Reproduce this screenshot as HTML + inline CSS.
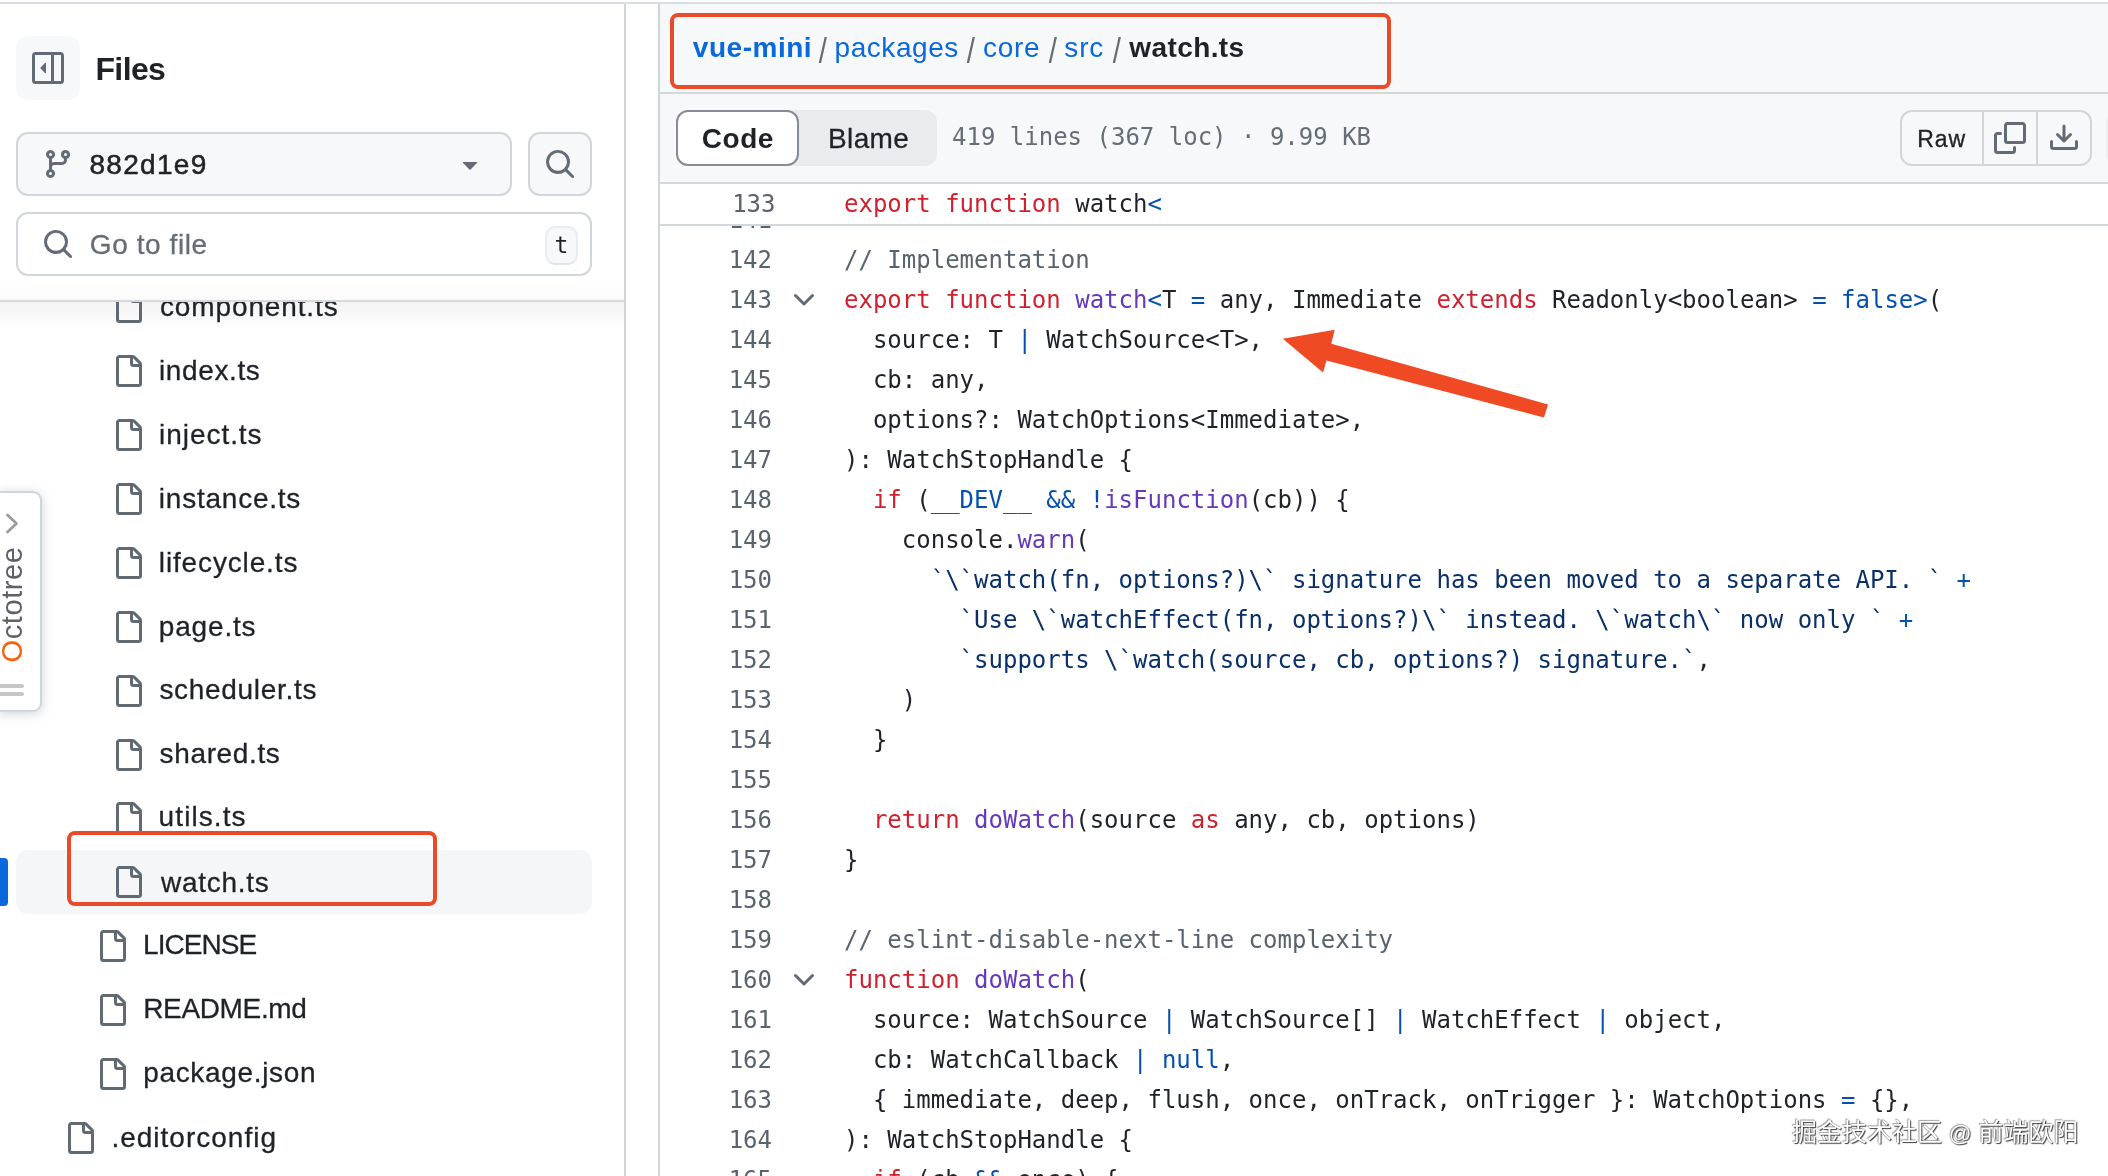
<!DOCTYPE html>
<html lang="zh"><head><meta charset="utf-8"><title>watch.ts</title>
<style>
*{box-sizing:border-box;margin:0;padding:0}
html,body{width:2108px;height:1176px;overflow:hidden;background:#fff}
body{will-change:transform;position:relative;font-family:"Liberation Sans","Noto Sans CJK SC",sans-serif;color:#1f2328;-webkit-font-smoothing:antialiased}
.abs,.ic,.tname,.ln,.cl{position:absolute}
.ic{display:block}
.topline{left:0;top:2px;width:2108px;height:2px;background:#d9dce0}
/* sidebar */
.sb-border{left:624px;top:4px;width:2px;height:1172px;background:#d2d5d8}
.tree{left:0;top:302px;width:624px;height:874px;overflow:hidden}
.treein{position:absolute;left:0;top:-302px;width:624px;height:1176px}
.tname{font-size:28px;line-height:40px;white-space:nowrap;color:#1f2328;-webkit-text-stroke:.3px #1f2328}
.sel{left:16px;top:850px;width:576px;height:64px;border-radius:12px;background:#f4f6f8}
.selbar{left:0;top:858px;width:8px;height:48px;border-radius:0 4px 4px 0;background:#0969da}
.sbhead{left:0;top:4px;width:624px;height:296px;background:linear-gradient(#fff 0,#fff 278px,#fafafb 296px)}
.sbline{left:0;top:300px;width:624px;height:2px;background:#d6d8da}
.sbshadow{left:0;top:302px;width:624px;height:28px;background:linear-gradient(#f3f3f4,#fff)}
.collapse{left:16px;top:36px;width:64px;height:64px;border-radius:12px;background:#f6f8fa}
.files{font-size:32px;line-height:40px;font-weight:bold;color:#1f2328}
.btn{background:#f6f8fa;border:2px solid #d1d6db;border-radius:12px}
.branch{left:16px;top:132px;width:496px;height:64px}
.branchtxt{font-size:28px;line-height:40px;-webkit-text-stroke:.55px #1f2328}
.searchbtn{left:528px;top:132px;width:64px;height:64px}
.goto{left:16px;top:212px;width:576px;height:64px;background:#fff;border:2px solid #d1d6db;border-radius:12px}
.gototxt{font-size:28px;line-height:40px;color:#656d76;white-space:nowrap;-webkit-text-stroke:.3px #656d76}
.kbd{left:545px;top:225.5px;width:33px;height:39.5px;border-radius:10px;background:#f6f8fa;border:2px solid #eaecef;border-bottom-color:#e1e4e8;font-family:"DejaVu Sans Mono","Liberation Mono",monospace;font-size:23px;line-height:35px;text-align:center;color:#1f2328}
/* octotree */
.octo{left:-2px;top:491px;width:44px;height:221px;background:#fff;border:2px solid #cdd6de;border-radius:0 9px 9px 0;box-shadow:0 2px 12px rgba(110,125,140,.32)}
.octotxt{left:-45px;top:585.5px;width:113px;height:40px;font-size:29px;line-height:40px;letter-spacing:.6px;color:#5b626a;transform:rotate(-90deg);transform-origin:center;white-space:nowrap;text-align:left}
.octotxt b{font-weight:normal;color:#f4620c}
.bar{left:0;width:24px;height:4px;border-radius:0 2px 2px 0;background:#c6c6c6}
/* main */
.mainborder{left:658px;top:4px;width:2px;height:1172px;background:#d1d4d9}
.head{left:660px;top:4px;width:1448px;height:88px;background:#f6f8fa}
.headline{left:660px;top:92px;width:1448px;height:2px;background:#d3d8dd}
.tool{left:660px;top:94px;width:1448px;height:88px;background:#f6f8fa}
.toolline{left:660px;top:182px;width:1448px;height:2px;background:#d3d8dd}
.crumb{font-size:28px;line-height:40px;white-space:nowrap;color:#1f2328}
.lnk{color:#0969da}
.bold{font-weight:bold}
.slash{top:31px;font-size:35px;line-height:40px;color:#656d76;transform:scaleX(.84)}
.seg{left:676px;top:110px;width:261px;height:56px;border-radius:12px;background:#e9ecef}
.codebtn{left:676px;top:110px;width:123px;height:56px;border-radius:12px;background:#fff;border:2px solid #868c93;font-size:28px;font-weight:bold;line-height:52px;text-align:center;color:#1f2328}
.blame{font-size:28px;line-height:40px;color:#1f2328;-webkit-text-stroke:.3px #1f2328}
.codetxt{font-size:28px;line-height:40px;font-weight:bold;color:#1f2328}
.meta{left:952px;top:117px;font-family:"DejaVu Sans Mono","Liberation Mono",monospace;font-size:24px;line-height:40px;color:#656d76;white-space:pre}
.grp{left:1900px;top:110px;width:192px;height:56px}
.div{top:112px;width:2px;height:52px;background:#d1d6db}
.raw{font-size:23px;line-height:40px;color:#1f2328;-webkit-text-stroke:.35px #1f2328}
/* code */
.code{left:660px;top:226px;width:1448px;height:950px;overflow:hidden}
.codein{position:absolute;left:-660px;top:-226px;width:2108px;height:1176px}
.ln,.cl{font-family:"DejaVu Sans Mono","Liberation Mono",monospace;font-size:24px;line-height:40px;height:40px;white-space:pre}
.ln{left:660px;width:112px;text-align:right;color:#59636e}
.cl{left:844px;color:#1f2328}
.k{color:#cf222e}.f{color:#6639ba}.c{color:#0550ae}.s{color:#0a3069}.m{color:#59636e}
.sticky{left:660px;top:184px;width:1448px;height:40px;background:#fff}
.stickyline{left:660px;top:224px;width:1448px;height:2px;background:#d3d8dd}
.redbox{border:4px solid #ea4a29;border-radius:8px}
.wm span{font-size:22.5px;letter-spacing:.4px}
.wm{left:1792px;top:1112px;font-size:25px;line-height:40px;white-space:nowrap;color:#fff;text-shadow:1px 1px 1px #3c3c3c,0 0 1px #777,-1px -1px 1px #aaa}
</style></head><body>
<div class="abs topline"></div>

<!-- sidebar tree -->
<div class="abs sbshadow"></div>
<div class="abs tree"><div class="treein">
<div class="abs sel"></div>
<svg class="ic" style="left:112px;top:291.1px" width="32" height="32" viewBox="0 0 16 16" fill="#616a74" ><path d="M2 1.75C2 .784 2.784 0 3.75 0h6.586c.464 0 .909.184 1.237.513l2.914 2.914c.329.328.513.773.513 1.237v9.586A1.75 1.75 0 0 1 13.25 16h-9.5A1.75 1.75 0 0 1 2 14.25Zm1.75-.25a.25.25 0 0 0-.25.25v12.5c0 .138.112.25.25.25h9.5a.25.25 0 0 0 .25-.25V6h-2.75A1.75 1.75 0 0 1 9 4.25V1.5Zm6.75.062V4.25c0 .138.112.25.25.25h2.688l-.011-.013-2.914-2.914-.013-.011Z"/></svg>
<div class="abs tname" style="left:160.0px;top:287px;letter-spacing:0.87px">component.ts</div>
<svg class="ic" style="left:112px;top:355.0px" width="32" height="32" viewBox="0 0 16 16" fill="#616a74" ><path d="M2 1.75C2 .784 2.784 0 3.75 0h6.586c.464 0 .909.184 1.237.513l2.914 2.914c.329.328.513.773.513 1.237v9.586A1.75 1.75 0 0 1 13.25 16h-9.5A1.75 1.75 0 0 1 2 14.25Zm1.75-.25a.25.25 0 0 0-.25.25v12.5c0 .138.112.25.25.25h9.5a.25.25 0 0 0 .25-.25V6h-2.75A1.75 1.75 0 0 1 9 4.25V1.5Zm6.75.062V4.25c0 .138.112.25.25.25h2.688l-.011-.013-2.914-2.914-.013-.011Z"/></svg>
<div class="abs tname" style="left:159.0px;top:351px;letter-spacing:0.61px">index.ts</div>
<svg class="ic" style="left:112px;top:418.9px" width="32" height="32" viewBox="0 0 16 16" fill="#616a74" ><path d="M2 1.75C2 .784 2.784 0 3.75 0h6.586c.464 0 .909.184 1.237.513l2.914 2.914c.329.328.513.773.513 1.237v9.586A1.75 1.75 0 0 1 13.25 16h-9.5A1.75 1.75 0 0 1 2 14.25Zm1.75-.25a.25.25 0 0 0-.25.25v12.5c0 .138.112.25.25.25h9.5a.25.25 0 0 0 .25-.25V6h-2.75A1.75 1.75 0 0 1 9 4.25V1.5Zm6.75.062V4.25c0 .138.112.25.25.25h2.688l-.011-.013-2.914-2.914-.013-.011Z"/></svg>
<div class="abs tname" style="left:159.0px;top:415px;letter-spacing:0.96px">inject.ts</div>
<svg class="ic" style="left:112px;top:482.8px" width="32" height="32" viewBox="0 0 16 16" fill="#616a74" ><path d="M2 1.75C2 .784 2.784 0 3.75 0h6.586c.464 0 .909.184 1.237.513l2.914 2.914c.329.328.513.773.513 1.237v9.586A1.75 1.75 0 0 1 13.25 16h-9.5A1.75 1.75 0 0 1 2 14.25Zm1.75-.25a.25.25 0 0 0-.25.25v12.5c0 .138.112.25.25.25h9.5a.25.25 0 0 0 .25-.25V6h-2.75A1.75 1.75 0 0 1 9 4.25V1.5Zm6.75.062V4.25c0 .138.112.25.25.25h2.688l-.011-.013-2.914-2.914-.013-.011Z"/></svg>
<div class="abs tname" style="left:158.8px;top:479px;letter-spacing:0.77px">instance.ts</div>
<svg class="ic" style="left:112px;top:546.8px" width="32" height="32" viewBox="0 0 16 16" fill="#616a74" ><path d="M2 1.75C2 .784 2.784 0 3.75 0h6.586c.464 0 .909.184 1.237.513l2.914 2.914c.329.328.513.773.513 1.237v9.586A1.75 1.75 0 0 1 13.25 16h-9.5A1.75 1.75 0 0 1 2 14.25Zm1.75-.25a.25.25 0 0 0-.25.25v12.5c0 .138.112.25.25.25h9.5a.25.25 0 0 0 .25-.25V6h-2.75A1.75 1.75 0 0 1 9 4.25V1.5Zm6.75.062V4.25c0 .138.112.25.25.25h2.688l-.011-.013-2.914-2.914-.013-.011Z"/></svg>
<div class="abs tname" style="left:158.8px;top:543px;letter-spacing:0.86px">lifecycle.ts</div>
<svg class="ic" style="left:112px;top:610.7px" width="32" height="32" viewBox="0 0 16 16" fill="#616a74" ><path d="M2 1.75C2 .784 2.784 0 3.75 0h6.586c.464 0 .909.184 1.237.513l2.914 2.914c.329.328.513.773.513 1.237v9.586A1.75 1.75 0 0 1 13.25 16h-9.5A1.75 1.75 0 0 1 2 14.25Zm1.75-.25a.25.25 0 0 0-.25.25v12.5c0 .138.112.25.25.25h9.5a.25.25 0 0 0 .25-.25V6h-2.75A1.75 1.75 0 0 1 9 4.25V1.5Zm6.75.062V4.25c0 .138.112.25.25.25h2.688l-.011-.013-2.914-2.914-.013-.011Z"/></svg>
<div class="abs tname" style="left:158.8px;top:607px;letter-spacing:0.83px">page.ts</div>
<svg class="ic" style="left:112px;top:674.6px" width="32" height="32" viewBox="0 0 16 16" fill="#616a74" ><path d="M2 1.75C2 .784 2.784 0 3.75 0h6.586c.464 0 .909.184 1.237.513l2.914 2.914c.329.328.513.773.513 1.237v9.586A1.75 1.75 0 0 1 13.25 16h-9.5A1.75 1.75 0 0 1 2 14.25Zm1.75-.25a.25.25 0 0 0-.25.25v12.5c0 .138.112.25.25.25h9.5a.25.25 0 0 0 .25-.25V6h-2.75A1.75 1.75 0 0 1 9 4.25V1.5Zm6.75.062V4.25c0 .138.112.25.25.25h2.688l-.011-.013-2.914-2.914-.013-.011Z"/></svg>
<div class="abs tname" style="left:159.4px;top:670px;letter-spacing:0.69px">scheduler.ts</div>
<svg class="ic" style="left:112px;top:738.5px" width="32" height="32" viewBox="0 0 16 16" fill="#616a74" ><path d="M2 1.75C2 .784 2.784 0 3.75 0h6.586c.464 0 .909.184 1.237.513l2.914 2.914c.329.328.513.773.513 1.237v9.586A1.75 1.75 0 0 1 13.25 16h-9.5A1.75 1.75 0 0 1 2 14.25Zm1.75-.25a.25.25 0 0 0-.25.25v12.5c0 .138.112.25.25.25h9.5a.25.25 0 0 0 .25-.25V6h-2.75A1.75 1.75 0 0 1 9 4.25V1.5Zm6.75.062V4.25c0 .138.112.25.25.25h2.688l-.011-.013-2.914-2.914-.013-.011Z"/></svg>
<div class="abs tname" style="left:159.6px;top:734px;letter-spacing:0.63px">shared.ts</div>
<svg class="ic" style="left:112px;top:802.4px" width="32" height="32" viewBox="0 0 16 16" fill="#616a74" ><path d="M2 1.75C2 .784 2.784 0 3.75 0h6.586c.464 0 .909.184 1.237.513l2.914 2.914c.329.328.513.773.513 1.237v9.586A1.75 1.75 0 0 1 13.25 16h-9.5A1.75 1.75 0 0 1 2 14.25Zm1.75-.25a.25.25 0 0 0-.25.25v12.5c0 .138.112.25.25.25h9.5a.25.25 0 0 0 .25-.25V6h-2.75A1.75 1.75 0 0 1 9 4.25V1.5Zm6.75.062V4.25c0 .138.112.25.25.25h2.688l-.011-.013-2.914-2.914-.013-.011Z"/></svg>
<div class="abs tname" style="left:158.6px;top:797px;letter-spacing:1.09px">utils.ts</div>
<svg class="ic" style="left:112px;top:866.4px" width="32" height="32" viewBox="0 0 16 16" fill="#616a74" ><path d="M2 1.75C2 .784 2.784 0 3.75 0h6.586c.464 0 .909.184 1.237.513l2.914 2.914c.329.328.513.773.513 1.237v9.586A1.75 1.75 0 0 1 13.25 16h-9.5A1.75 1.75 0 0 1 2 14.25Zm1.75-.25a.25.25 0 0 0-.25.25v12.5c0 .138.112.25.25.25h9.5a.25.25 0 0 0 .25-.25V6h-2.75A1.75 1.75 0 0 1 9 4.25V1.5Zm6.75.062V4.25c0 .138.112.25.25.25h2.688l-.011-.013-2.914-2.914-.013-.011Z"/></svg>
<div class="abs tname" style="left:161.0px;top:863px;letter-spacing:0.71px">watch.ts</div>
<svg class="ic" style="left:96px;top:930.3px" width="32" height="32" viewBox="0 0 16 16" fill="#616a74" ><path d="M2 1.75C2 .784 2.784 0 3.75 0h6.586c.464 0 .909.184 1.237.513l2.914 2.914c.329.328.513.773.513 1.237v9.586A1.75 1.75 0 0 1 13.25 16h-9.5A1.75 1.75 0 0 1 2 14.25Zm1.75-.25a.25.25 0 0 0-.25.25v12.5c0 .138.112.25.25.25h9.5a.25.25 0 0 0 .25-.25V6h-2.75A1.75 1.75 0 0 1 9 4.25V1.5Zm6.75.062V4.25c0 .138.112.25.25.25h2.688l-.011-.013-2.914-2.914-.013-.011Z"/></svg>
<div class="abs tname" style="left:143.1px;top:925px;letter-spacing:-0.97px">LICENSE</div>
<svg class="ic" style="left:96px;top:994.2px" width="32" height="32" viewBox="0 0 16 16" fill="#616a74" ><path d="M2 1.75C2 .784 2.784 0 3.75 0h6.586c.464 0 .909.184 1.237.513l2.914 2.914c.329.328.513.773.513 1.237v9.586A1.75 1.75 0 0 1 13.25 16h-9.5A1.75 1.75 0 0 1 2 14.25Zm1.75-.25a.25.25 0 0 0-.25.25v12.5c0 .138.112.25.25.25h9.5a.25.25 0 0 0 .25-.25V6h-2.75A1.75 1.75 0 0 1 9 4.25V1.5Zm6.75.062V4.25c0 .138.112.25.25.25h2.688l-.011-.013-2.914-2.914-.013-.011Z"/></svg>
<div class="abs tname" style="left:143.2px;top:989px;letter-spacing:-0.35px">README.md</div>
<svg class="ic" style="left:96px;top:1058.1px" width="32" height="32" viewBox="0 0 16 16" fill="#616a74" ><path d="M2 1.75C2 .784 2.784 0 3.75 0h6.586c.464 0 .909.184 1.237.513l2.914 2.914c.329.328.513.773.513 1.237v9.586A1.75 1.75 0 0 1 13.25 16h-9.5A1.75 1.75 0 0 1 2 14.25Zm1.75-.25a.25.25 0 0 0-.25.25v12.5c0 .138.112.25.25.25h9.5a.25.25 0 0 0 .25-.25V6h-2.75A1.75 1.75 0 0 1 9 4.25V1.5Zm6.75.062V4.25c0 .138.112.25.25.25h2.688l-.011-.013-2.914-2.914-.013-.011Z"/></svg>
<div class="abs tname" style="left:143.2px;top:1053px;letter-spacing:0.67px">package.json</div>
<svg class="ic" style="left:64px;top:1122.0px" width="32" height="32" viewBox="0 0 16 16" fill="#616a74" ><path d="M2 1.75C2 .784 2.784 0 3.75 0h6.586c.464 0 .909.184 1.237.513l2.914 2.914c.329.328.513.773.513 1.237v9.586A1.75 1.75 0 0 1 13.25 16h-9.5A1.75 1.75 0 0 1 2 14.25Zm1.75-.25a.25.25 0 0 0-.25.25v12.5c0 .138.112.25.25.25h9.5a.25.25 0 0 0 .25-.25V6h-2.75A1.75 1.75 0 0 1 9 4.25V1.5Zm6.75.062V4.25c0 .138.112.25.25.25h2.688l-.011-.013-2.914-2.914-.013-.011Z"/></svg>
<div class="abs tname" style="left:111.4px;top:1118px;letter-spacing:1.01px">.editorconfig</div>
</div></div>
<div class="abs selbar"></div>
<div class="abs sbhead"></div>
<div class="abs sbline"></div>
<div class="abs collapse"></div>
<svg class="ic" style="left:32px;top:52px" width="32" height="32" viewBox="0 0 16 16" fill="#636c76" ><path d="m4.177 7.823 2.396-2.396A.25.25 0 0 1 7 5.604v4.792a.25.25 0 0 1-.427.177L4.177 8.177a.25.25 0 0 1 0-.354Z"/><path d="M0 1.75C0 .784.784 0 1.75 0h12.5C15.216 0 16 .784 16 1.75v12.5A1.75 1.75 0 0 1 14.25 16H1.75A1.75 1.75 0 0 1 0 14.25Zm1.75-.25a.25.25 0 0 0-.25.25v12.5c0 .138.112.25.25.25H9.5v-13Zm12.5 13a.25.25 0 0 0 .25-.25V1.75a.25.25 0 0 0-.25-.25H11v13Z"/></svg>
<div class="abs files" style="left:95.4px;top:49px;letter-spacing:-0.6px">Files</div>
<div class="abs btn branch"></div>
<svg class="ic" style="left:41.7px;top:148px" width="32" height="32" viewBox="0 0 16 16" fill="#636c76" ><path d="M9.5 3.25a2.25 2.25 0 1 1 3 2.122V6A2.5 2.5 0 0 1 10 8.5H6a1 1 0 0 0-1 1v1.128a2.251 2.251 0 1 1-1.5 0V5.372a2.25 2.25 0 1 1 1.5 0v1.836A2.493 2.493 0 0 1 6 7h4a1 1 0 0 0 1-1v-.628A2.25 2.25 0 0 1 9.5 3.25Zm-6 0a.75.75 0 1 0 1.5 0 .75.75 0 0 0-1.5 0Zm8.25-.75a.75.75 0 1 0 0 1.5.75.75 0 0 0 0-1.5ZM4.25 12a.75.75 0 1 0 0 1.5.75.75 0 0 0 0-1.5Z"/></svg>
<div class="abs branchtxt" style="left:89.4px;top:145px;letter-spacing:1.32px">882d1e9</div>
<svg class="ic" style="left:454px;top:148px" width="32" height="32" viewBox="0 0 16 16" fill="#636c76" ><path d="m4.427 7.427 3.396 3.396a.25.25 0 0 0 .354 0l3.396-3.396A.25.25 0 0 0 11.396 7H4.604a.25.25 0 0 0-.177.427Z"/></svg>
<div class="abs btn searchbtn"></div>
<svg class="ic" style="left:544px;top:148px" width="32" height="32" viewBox="0 0 16 16" fill="#636c76" ><path d="M10.68 11.74a6 6 0 0 1-7.922-8.982 6 6 0 0 1 8.982 7.922l3.04 3.04a.749.749 0 0 1-.326 1.275.749.749 0 0 1-.734-.215ZM11.5 7a4.499 4.499 0 1 0-8.997 0A4.499 4.499 0 0 0 11.5 7Z"/></svg>
<div class="abs goto"></div>
<svg class="ic" style="left:42px;top:228px" width="32" height="32" viewBox="0 0 16 16" fill="#636c76" ><path d="M10.68 11.74a6 6 0 0 1-7.922-8.982 6 6 0 0 1 8.982 7.922l3.04 3.04a.749.749 0 0 1-.326 1.275.749.749 0 0 1-.734-.215ZM11.5 7a4.499 4.499 0 1 0-8.997 0A4.499 4.499 0 0 0 11.5 7Z"/></svg>
<div class="abs gototxt" style="left:89.8px;top:225px;letter-spacing:0.58px">Go to file</div>
<div class="abs kbd">t</div>
<div class="abs sb-border"></div>

<!-- octotree tab -->
<div class="abs octo"></div>
<svg class="ic" style="left:4px;top:512px" width="16" height="24" viewBox="0 0 16 24" fill="none" stroke="#9c9c9c" stroke-width="2.8" stroke-linecap="round" stroke-linejoin="round"><path d="M3.5 3 L12.5 11.5 L3.5 20"/></svg>
<div class="abs octotxt"><b>O</b>ctotree</div>
<div class="abs bar" style="top:684px"></div>
<div class="abs bar" style="top:692px"></div>

<!-- main -->
<div class="abs head"></div>
<div class="abs headline"></div>
<div class="abs tool"></div>
<div class="abs toolline"></div>
<div class="abs mainborder"></div>
<div class="abs crumb lnk bold" style="left:692.8px;top:28px;letter-spacing:0.53px">vue-mini</div><div class="abs slash" style="left:818.2px">/</div><div class="abs crumb lnk" style="left:834.5px;top:28px;letter-spacing:0.57px">packages</div><div class="abs slash" style="left:966.2px">/</div><div class="abs crumb lnk" style="left:983.0px;top:28px;letter-spacing:0.67px">core</div><div class="abs slash" style="left:1048.1px">/</div><div class="abs crumb lnk" style="left:1064.3px;top:28px;letter-spacing:0.85px">src</div><div class="abs slash" style="left:1112px">/</div><div class="abs crumb bold" style="left:1129.3px;top:28px;letter-spacing:0.4px">watch.ts</div>
<div class="abs redbox" style="left:670px;top:13px;width:721px;height:76px"></div>
<div class="abs seg"></div>
<div class="abs codebtn"></div><div class="abs codetxt" style="left:701.7px;top:119px;letter-spacing:0.57px">Code</div>
<div class="abs blame" style="left:828.0px;top:119px;letter-spacing:0.38px">Blame</div>
<div class="abs meta">419 lines (367 loc) · 9.99 KB</div>
<div class="abs btn grp"></div>
<div class="abs div" style="left:1982px"></div>
<div class="abs div" style="left:2036px"></div>
<div class="abs raw" style="left:1917.3px;top:119px;letter-spacing:0.85px">Raw</div>
<svg class="ic" style="left:1994px;top:122px" width="32" height="32" viewBox="0 0 16 16" fill="#636c76" ><path d="M0 6.75C0 5.784.784 5 1.75 5h1.5a.75.75 0 0 1 0 1.5h-1.5a.25.25 0 0 0-.25.25v7.5c0 .138.112.25.25.25h7.5a.25.25 0 0 0 .25-.25v-1.5a.75.75 0 0 1 1.5 0v1.5A1.75 1.75 0 0 1 9.25 16h-7.5A1.75 1.75 0 0 1 0 14.25Z"/><path d="M5 1.75C5 .784 5.784 0 6.75 0h7.5C15.216 0 16 .784 16 1.75v7.5A1.75 1.75 0 0 1 14.25 11h-7.5A1.75 1.75 0 0 1 5 9.25Zm1.75-.25a.25.25 0 0 0-.25.25v7.5c0 .138.112.25.25.25h7.5a.25.25 0 0 0 .25-.25v-7.5a.25.25 0 0 0-.25-.25Z"/></svg>
<svg class="ic" style="left:2048px;top:122px" width="32" height="32" viewBox="0 0 16 16" fill="#636c76" ><path d="M2.75 14A1.75 1.75 0 0 1 1 12.25v-2.5a.75.75 0 0 1 1.5 0v2.5c0 .138.112.25.25.25h10.5a.25.25 0 0 0 .25-.25v-2.5a.75.75 0 0 1 1.5 0v2.5A1.75 1.75 0 0 1 13.25 14Z"/><path d="M7.25 7.689V2a.75.75 0 0 1 1.5 0v5.689l1.97-1.969a.749.749 0 1 1 1.06 1.06l-3.25 3.25a.749.749 0 0 1-1.06 0L4.22 6.78a.749.749 0 1 1 1.06-1.06l1.97 1.969Z"/></svg>

<div class="abs" style="left:2105.5px;top:113px;width:20px;height:49px;border-radius:8px;background:#eceff3"></div>

<!-- code -->
<div class="abs code"><div class="codein">
<div class="ln" style="top:200px">141</div><div class="cl" style="top:200px"></div>
<div class="ln" style="top:240px">142</div><div class="cl" style="top:240px"><span class="m">// Implementation</span></div>
<div class="ln" style="top:280px">143</div><div class="cl" style="top:280px"><span class="k">export</span> <span class="k">function</span> <span class="f">watch</span><span class="c">&lt;</span>T <span class="c">=</span> any, Immediate <span class="k">extends</span> Readonly&lt;boolean&gt; <span class="c">=</span> <span class="c">false</span><span class="c">&gt;</span>(</div>
<svg class="ic" style="left:788px;top:284px" width="32" height="32" viewBox="0 0 16 16" fill="#616a74" ><path d="M12.78 5.22a.749.749 0 0 1 0 1.06l-4.25 4.25a.749.749 0 0 1-1.06 0L3.22 6.28a.749.749 0 1 1 1.06-1.06L8 8.939l3.72-3.719a.749.749 0 0 1 1.06 0Z"/></svg>
<div class="ln" style="top:320px">144</div><div class="cl" style="top:320px">  source: T <span class="c">|</span> WatchSource&lt;T&gt;,</div>
<div class="ln" style="top:360px">145</div><div class="cl" style="top:360px">  cb: any,</div>
<div class="ln" style="top:400px">146</div><div class="cl" style="top:400px">  options?: WatchOptions&lt;Immediate&gt;,</div>
<div class="ln" style="top:440px">147</div><div class="cl" style="top:440px">): WatchStopHandle {</div>
<div class="ln" style="top:480px">148</div><div class="cl" style="top:480px">  <span class="k">if</span> (<span class="c">__DEV__</span> <span class="c">&amp;&amp;</span> <span class="c">!</span><span class="f">isFunction</span>(cb)) {</div>
<div class="ln" style="top:520px">149</div><div class="cl" style="top:520px">    console.<span class="f">warn</span>(</div>
<div class="ln" style="top:560px">150</div><div class="cl" style="top:560px">      <span class="s">`\`watch(fn, options?)\` signature has been moved to a separate API. `</span> <span class="c">+</span></div>
<div class="ln" style="top:600px">151</div><div class="cl" style="top:600px">        <span class="s">`Use \`watchEffect(fn, options?)\` instead. \`watch\` now only `</span> <span class="c">+</span></div>
<div class="ln" style="top:640px">152</div><div class="cl" style="top:640px">        <span class="s">`supports \`watch(source, cb, options?) signature.`</span>,</div>
<div class="ln" style="top:680px">153</div><div class="cl" style="top:680px">    )</div>
<div class="ln" style="top:720px">154</div><div class="cl" style="top:720px">  }</div>
<div class="ln" style="top:760px">155</div><div class="cl" style="top:760px"></div>
<div class="ln" style="top:800px">156</div><div class="cl" style="top:800px">  <span class="k">return</span> <span class="f">doWatch</span>(source <span class="k">as</span> any, cb, options)</div>
<div class="ln" style="top:840px">157</div><div class="cl" style="top:840px">}</div>
<div class="ln" style="top:880px">158</div><div class="cl" style="top:880px"></div>
<div class="ln" style="top:920px">159</div><div class="cl" style="top:920px"><span class="m">// eslint-disable-next-line complexity</span></div>
<div class="ln" style="top:960px">160</div><div class="cl" style="top:960px"><span class="k">function</span> <span class="f">doWatch</span>(</div>
<svg class="ic" style="left:788px;top:964px" width="32" height="32" viewBox="0 0 16 16" fill="#616a74" ><path d="M12.78 5.22a.749.749 0 0 1 0 1.06l-4.25 4.25a.749.749 0 0 1-1.06 0L3.22 6.28a.749.749 0 1 1 1.06-1.06L8 8.939l3.72-3.719a.749.749 0 0 1 1.06 0Z"/></svg>
<div class="ln" style="top:1000px">161</div><div class="cl" style="top:1000px">  source: WatchSource <span class="c">|</span> WatchSource[] <span class="c">|</span> WatchEffect <span class="c">|</span> object,</div>
<div class="ln" style="top:1040px">162</div><div class="cl" style="top:1040px">  cb: WatchCallback <span class="c">|</span> <span class="c">null</span>,</div>
<div class="ln" style="top:1080px">163</div><div class="cl" style="top:1080px">  { immediate, deep, flush, once, onTrack, onTrigger }: WatchOptions <span class="c">=</span> {},</div>
<div class="ln" style="top:1120px">164</div><div class="cl" style="top:1120px">): WatchStopHandle {</div>
<div class="ln" style="top:1160px">165</div><div class="cl" style="top:1160px">  <span class="k">if</span> (cb <span class="c">&amp;&amp;</span> once) {</div>
</div></div>
<div class="abs sticky"></div>
<div class="ln" style="top:185px;left:663.5px;line-height:38px">133</div>
<div class="cl" style="top:185px;line-height:38px"><span class="k">export</span> <span class="k">function</span> watch<span class="c">&lt;</span></div>
<div class="abs stickyline"></div>

<!-- annotations -->
<svg class="ic" style="left:0;top:0" width="2108" height="1176" viewBox="0 0 2108 1176"><polygon fill="#ef4a24" points="1282.8,338.8 1334.7,329.7 1331.3,343.7 1548.1,404.4 1543.9,417.5 1326.5,360.4 1323,372.5"/></svg>
<div class="abs redbox" style="left:67px;top:830.5px;width:370px;height:75.5px"></div>
<div class="abs wm">掘金技术社区<span> @ </span>前端欧阳</div>
</body></html>
